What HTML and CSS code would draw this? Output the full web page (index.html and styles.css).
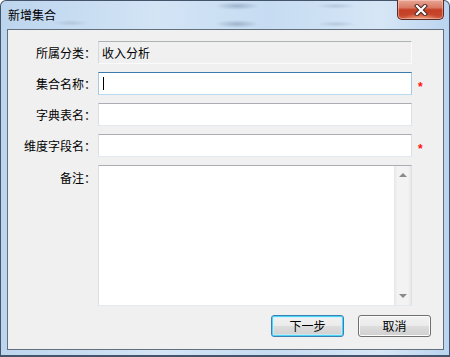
FILE: index.html
```html
<!DOCTYPE html>
<html lang="zh-CN">
<head>
  <meta charset="UTF-8">
  <title>新增集合</title>
  <link rel="stylesheet" href="styles.css">
</head>
<body>
  <div class="window">
    <div class="titlebar">
      <span class="title">新增集合</span>
      <div class="close">
        <svg width="14" height="12" viewBox="0 0 14 12">
          <path d="M3 2 L11 10 M11 2 L3 10" stroke="#4b2a25" stroke-width="4.2" stroke-linecap="square" fill="none"/>
          <path d="M3 2 L11 10 M11 2 L3 10" stroke="#ffffff" stroke-width="2.2" stroke-linecap="square" fill="none"/>
        </svg>
      </div>
    </div>

    <div class="client">
      <div class="form">
        <label class="label">所属分类：</label>
        <div class="field disabled">收入分析</div>
        <span></span>

        <label class="label">集合名称：</label>
        <div class="field focused"><span class="caret"></span></div>
        <span class="star">*</span>

        <label class="label">字典表名：</label>
        <div class="field"></div>
        <span></span>

        <label class="label">维度字段名：</label>
        <div class="field"></div>
        <span class="star">*</span>

        <label class="label label-top">备注：</label>
        <div class="field memo">
          <div class="memo-text"></div>
          <div class="scrollbar">
            <span class="arrow up"></span>
            <span class="arrow down"></span>
          </div>
        </div>
        <span></span>
      </div>

      <div class="actions">
        <button class="btn default">下一步</button>
        <button class="btn">取消</button>
      </div>
    </div>
  </div>
</body>
</html>
```

FILE: styles.css
```css
body {
  margin: 0;
  padding: 0;
  background: #ffffff;
  font-family: "Noto Sans CJK SC", "Liberation Sans", sans-serif;
  font-size: 12px;
  color: #000;
}

.window {
  box-sizing: border-box;
  width: 450px;
  height: 357px;
  border: 1px solid #44546a;
  border-bottom-width: 2px;
  border-radius: 6px 6px 0 0;
  background:
    radial-gradient(ellipse 22px 4px at 236px 5px, rgba(80, 100, 130, 0.35), transparent),
    radial-gradient(ellipse 22px 4px at 236px 23px, rgba(80, 100, 130, 0.35), transparent),
    radial-gradient(ellipse 20px 3px at 335px 5px, rgba(80, 100, 130, 0.2), transparent),
    radial-gradient(ellipse 20px 3px at 335px 23px, rgba(80, 100, 130, 0.2), transparent),
    radial-gradient(ellipse 18px 3px at 70px 22px, rgba(80, 100, 130, 0.18), transparent),
    linear-gradient(to right, #bcd5ee 0%, #d3e4f5 35%, #c6dcf2 60%, #d6e6f6 85%, #bad4ef 100%);
  display: flex;
  flex-direction: column;
}

.titlebar {
  height: 28px;
  display: flex;
  justify-content: space-between;
  align-items: flex-start;
}

.title {
  padding-left: 7px;
  line-height: 28px;
  font-size: 12px;
  color: #000;
}

.close {
  box-sizing: border-box;
  width: 47px;
  height: 20px;
  margin-top: -1px;
  margin-right: 5px;
  border: 1px solid #5b2a22;
  border-top: none;
  border-radius: 0 0 5px 5px;
  background:
    radial-gradient(ellipse 18px 6px at 50% 100%, rgba(255, 190, 150, 0.7), transparent),
    linear-gradient(to bottom, #e8a797 0%, #d97a63 40%, #c43f24 52%, #c6462b 80%, #d4624a 100%);
  box-shadow: inset 0 0 0 1px rgba(255, 220, 210, 0.45);
  display: flex;
  justify-content: center;
  align-items: center;
}

.client {
  box-sizing: border-box;
  width: 437px;
  height: 321px;
  margin-left: 6px;
  border: 1px solid #62707e;
  background: #f0f0f0;
  display: flex;
  flex-direction: column;
}

.form {
  display: grid;
  grid-template-columns: 88px 314px 1fr;
  grid-template-rows: 23px 23px 23px 23px 141px;
  column-gap: 2px;
  row-gap: 8px;
  padding-top: 11px;
}

.label {
  text-align: right;
  line-height: 23px;
  white-space: nowrap;
}

.label-top {
  line-height: 1;
  padding-top: 7px;
}

.field {
  box-sizing: border-box;
  height: 23px;
  background: #ffffff;
  border: 1px solid #dbdfe6;
  border-top-color: #abadb3;
  border-bottom-color: #e3e9ef;
  padding-left: 3px;
  line-height: 21px;
  display: flex;
  align-items: center;
}

.field.disabled {
  background: #f0f0f0;
  border-color: #fbfbfb;
  border-top-color: #adb2b5;
  border-left-color: #d5d9dc;
}

.field.focused {
  border-color: #a4c9e3;
  border-top-color: #3d7bad;
  border-bottom-color: #b7d9ed;
  padding-left: 4px;
}

.caret {
  width: 1px;
  height: 13px;
  background: #000;
}

.star {
  color: #ff1010;
  font-family: "Liberation Sans", sans-serif;
  font-size: 12px;
  font-weight: bold;
  line-height: 23px;
  padding-left: 4px;
  padding-top: 4px;
}

.form .memo {
  height: 141px;
  padding: 0;
  align-items: stretch;
}

.memo-text {
  flex: 1;
}

.scrollbar {
  width: 17px;
  background: linear-gradient(to right, #e6e6e6, #f3f3f3 20%, #f3f3f3 80%, #e8e8e8);
  position: relative;
}

.arrow {
  position: absolute;
  left: 5px;
  width: 0;
  height: 0;
  border-left: 4px solid transparent;
  border-right: 4px solid transparent;
}

.arrow.up {
  top: 7px;
  border-bottom: 4px solid #8a8a8a;
}

.arrow.down {
  bottom: 7px;
  border-top: 4px solid #8a8a8a;
}

.actions {
  display: flex;
  justify-content: flex-end;
  gap: 14px;
  padding-top: 9px;
  padding-right: 12px;
}

.btn {
  box-sizing: border-box;
  width: 73px;
  height: 22px;
  border: 1px solid #707070;
  border-radius: 3px;
  background: linear-gradient(to bottom, #f2f2f2 0%, #ebebeb 48%, #dddddd 52%, #cfcfcf 100%);
  box-shadow: inset 0 0 0 1px #fcfcfc;
  font-family: "Noto Sans CJK SC", "Liberation Sans", sans-serif;
  font-size: 12px;
  color: #000;
  padding: 0;
  line-height: 20px;
}

.btn.default {
  border-color: #3c7fb1;
  box-shadow: inset 0 0 0 1px #48d6fb, inset 0 0 0 2px rgba(200, 240, 253, 0.6);
}
```
